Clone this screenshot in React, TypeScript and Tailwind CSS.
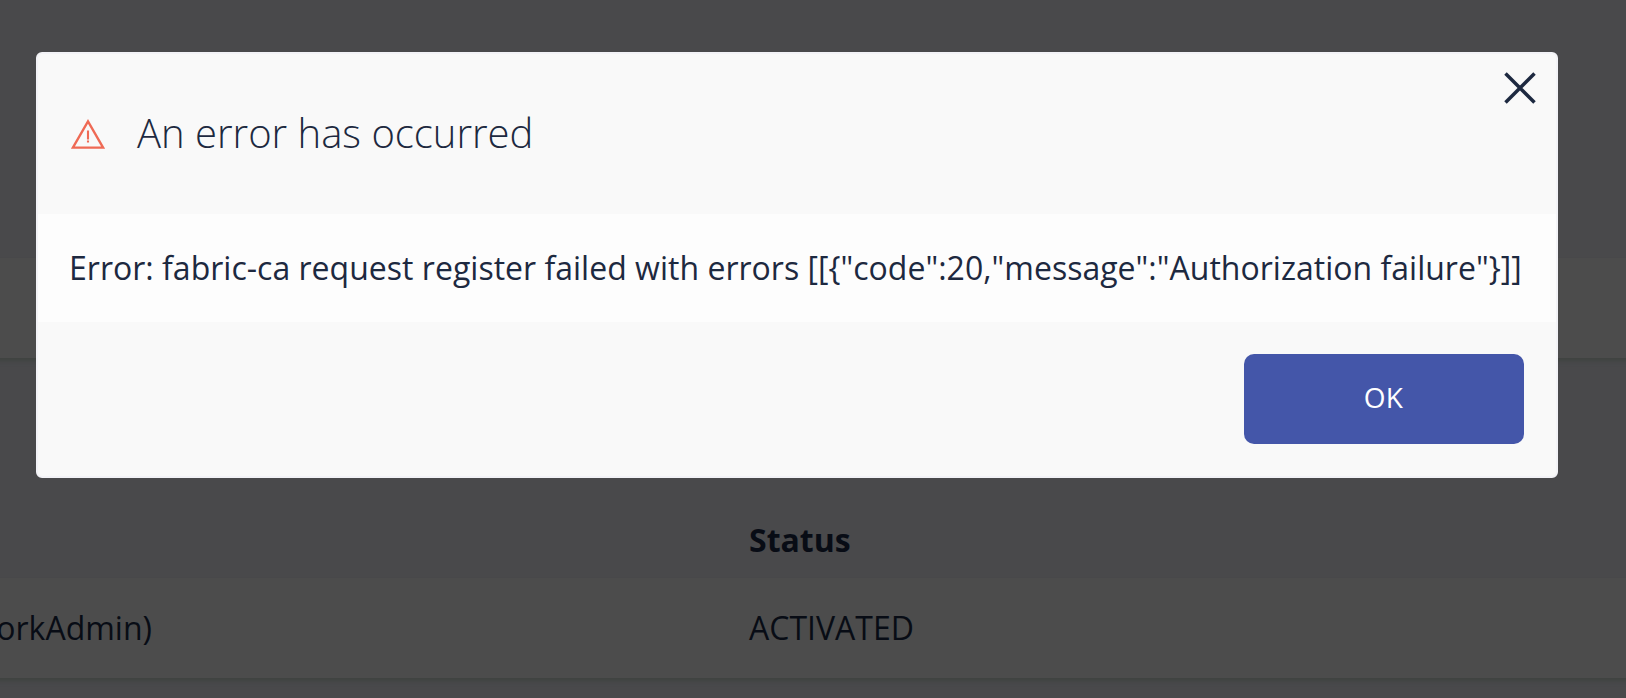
function Backdrop() {
  return (
    <div className="flex h-full flex-col overflow-hidden bg-[#49494b]">
      <div className="-mx-[10px] mt-[258px] h-[100px] shrink-0 bg-[#4c4c4c] shadow-[0_4px_4px_-1px_#3f4341]" />
      <div className="flex h-[220px] shrink-0 items-end pb-[16px] font-bold">
        <div className="w-[749px] shrink-0" />
        <div className="leading-[44px]">Status</div>
      </div>
      <div className="-mx-[10px] flex h-[100px] shrink-0 items-center bg-[#4c4c4c] px-[10px] shadow-[0_4px_4px_-1px_#3f4341]">
        <div className="flex w-[749px] shrink-0">
          <div className="flex w-[152px] shrink-0 justify-end whitespace-nowrap">orkAdmin)</div>
        </div>
        <div>ACTIVATED</div>
      </div>
    </div>
  );
}

function WarningIcon() {
  return (
    <svg className="mb-[2px] h-[32px] w-[34px] shrink-0" viewBox="0 0 34 32" fill="none">
      <path d="M17 4.4 L32.1 30.6 H1.9 Z" stroke="#ef6a55" strokeWidth="2.3" />
      <path d="M17 13.5 V22.4 M17 23.6 V25.6" stroke="#ef6a55" strokeWidth="2.1" />
    </svg>
  );
}

function CloseIcon() {
  return (
    <svg className="h-8 w-8" viewBox="0 0 32 32" fill="none">
      <path d="M1.5 1.5 L30.5 30.5 M30.5 1.5 L1.5 30.5" stroke="#1d2940" strokeWidth="3.5" />
    </svg>
  );
}

export default function App() {
  return (
    <div className="relative h-[698px] w-full overflow-hidden font-['Open_Sans','Noto_Sans',sans-serif] text-[32px] text-[#080c15]">
      <Backdrop />
      <div
        role="dialog"
        className="absolute top-[52px] left-[36px] flex h-[426px] w-[1522px] flex-col rounded-[6px] border-2 border-[#f3f3f7] bg-[#f9f9f9] text-[#1d2940]"
      >
        <header className="flex h-[160px] shrink-0 items-center pl-[33px]">
          <WarningIcon />
          <h1 className="mb-[2px] ml-[32px] text-[40px] leading-[56px] font-light whitespace-nowrap">
            An error has occurred
          </h1>
        </header>
        <div className="flex h-[108px] shrink-0 items-center bg-[#fdfdfd] pl-[31px] tracking-[0.013px] whitespace-nowrap">
          Error: fabric-ca request register failed with errors [[{'{"code":20,"message":"Authorization failure"}'}]]
        </div>
        <footer className="flex flex-1 items-start justify-end pt-[32px] pr-[32px]">
          <button className="h-[90px] w-[280px] rounded-[10px] bg-[#4456a9] pr-[1px] pb-[5px] text-[28px] tracking-[0.4px] text-white">
            OK
          </button>
        </footer>
        <button aria-label="Close" className="absolute top-[18px] right-[20px]">
          <CloseIcon />
        </button>
      </div>
    </div>
  );
}
